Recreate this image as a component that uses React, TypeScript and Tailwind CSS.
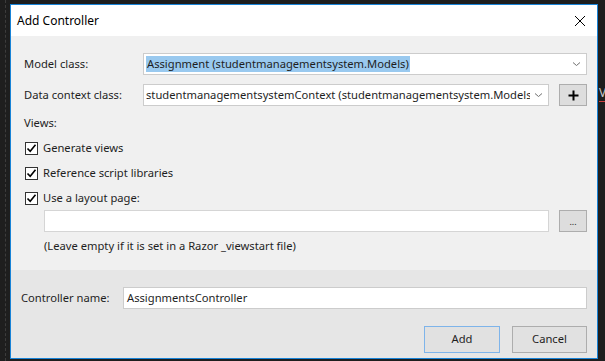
import React from "react";

const font = { fontFamily: '"Noto Sans", "Open Sans", sans-serif' };

function CheckBox() {
  return (
    <div className="flex h-[13px] w-[13px] shrink-0 items-center justify-center border border-[#333333] bg-white">
      <svg width="11" height="11" viewBox="0 0 11 11">
        <path d="M1.5 5.5 L4.2 8.3 L9.5 1.8" fill="none" stroke="#000" strokeWidth="1.6" />
      </svg>
    </div>
  );
}

function Check({ label, h }: { label: string; h: string }) {
  return (
    <div className={`flex items-center pl-[1px] ${h}`}>
      <CheckBox />
      <span className="ml-[5px]">{label}</span>
    </div>
  );
}

function Chevron() {
  return (
    <svg width="9" height="6" viewBox="0 0 9 6">
      <path d="M1 1.5 L4.5 4.5 L8 1.5" fill="none" stroke="#707070" strokeWidth="1" />
    </svg>
  );
}

export default function App() {
  return (
    <div
      className="relative h-[361px] w-[605px] overflow-hidden bg-[#1e1e1e] pl-[10px] pt-[4px] text-[11.2px] text-[#1e1e1e]"
      style={font}
    >
      <div className="absolute left-[5px] top-0 h-[361px] border-l border-dashed border-[#3c3c3c]" />
      <div className="absolute left-[599px] top-[84px] text-[12px] text-[#c8c8c8]">V</div>
      <div className="absolute left-[599px] top-[101px] h-[1px] w-[6px] bg-[#d04040]" />
      <div className="relative flex h-[355px] w-[588px] flex-col border border-[#1883d7] bg-[#f0f0f0]">
        {/* title bar */}
        <div className="flex h-[31px] items-center justify-between bg-white pl-[6px] pr-[11px]">
          <span className="text-[12px] text-black">Add Controller</span>
          <svg width="12" height="12" viewBox="0 0 12 12">
            <path d="M1 1 L11 11 M11 1 L1 11" stroke="#000" strokeWidth="1" />
          </svg>
        </div>
        {/* body */}
        <div className="flex h-[234px] flex-col pl-[13px] pr-[10px] pt-[17px]">
          <div className="flex h-[22px] items-center">
            <span className="w-[119px]">Model class:</span>
            <div className="flex h-[22px] flex-1 items-center justify-between border border-[#cccccc] bg-white pl-[2px] pr-[5px]">
              <span className="bg-[#99c9ef] px-[1px] leading-[16px]">Assignment (studentmanagementsystem.Models)</span>
              <Chevron />
            </div>
          </div>
          <div className="mt-[9px] flex h-[22px] items-center">
            <span className="w-[119px]">Data context class:</span>
            <div className="flex h-[22px] w-[406px] items-center justify-between border border-[#cccccc] bg-white pl-[2px] pr-[5px]">
              <span className="min-w-0 overflow-hidden whitespace-nowrap">studentmanagementsystemContext (studentmanagementsystem.Models)</span>
              <div className="ml-[4px] shrink-0"><Chevron /></div>
            </div>
            <div className="ml-[10px] flex h-[22px] flex-1 items-center justify-center border border-[#adadad] bg-[#dddddd]">
              <svg width="11" height="11" viewBox="0 0 11 11">
                <path d="M5.5 0.5 V10.5 M0.5 5.5 H10.5" stroke="#000" strokeWidth="2" />
              </svg>
            </div>
          </div>
          <div className="mt-[7px] flex h-[20px] items-center">Views:</div>
          <div className="mt-[3px]">
            <Check label="Generate views" h="h-[25px]" />
            <Check label="Reference script libraries" h="h-[25px]" />
            <Check label="Use a layout page:" h="h-[24px]" />
          </div>
          <div className="flex h-[22px] pl-[20px]">
            <div className="h-[22px] w-[505px] border border-[#d5d5d5] bg-white" />
            <div className="ml-[10px] flex h-[22px] flex-1 items-end justify-center border border-[#adadad] bg-[#dddddd] pb-[5px] text-[9px] leading-[9px]">
              ...
            </div>
          </div>
          <div className="mt-[6px] flex h-[16px] items-center pl-[20px]">
            (Leave empty if it is set in a Razor _viewstart file)
          </div>
        </div>
        {/* footer */}
        <div className="flex flex-1 flex-col bg-[#e6e6e6] pl-[10px] pr-[10px] pt-[17px]">
          <div className="flex h-[22px] items-center">
            <span className="w-[102px]">Controller name:</span>
            <div className="flex h-[22px] flex-1 items-center border border-[#cccccc] bg-white pl-[3px]">
              AssignmentsController
            </div>
          </div>
          <div className="mt-[17px] flex justify-end gap-[12px]">
            <div className="flex h-[27px] w-[76px] items-center justify-center border border-[#7eb4ea] bg-[#e1e1e1]">
              Add
            </div>
            <div className="flex h-[27px] w-[75px] items-center justify-center border border-[#adadad] bg-[#e1e1e1]">
              Cancel
            </div>
          </div>
        </div>
      </div>
    </div>
  );
}
